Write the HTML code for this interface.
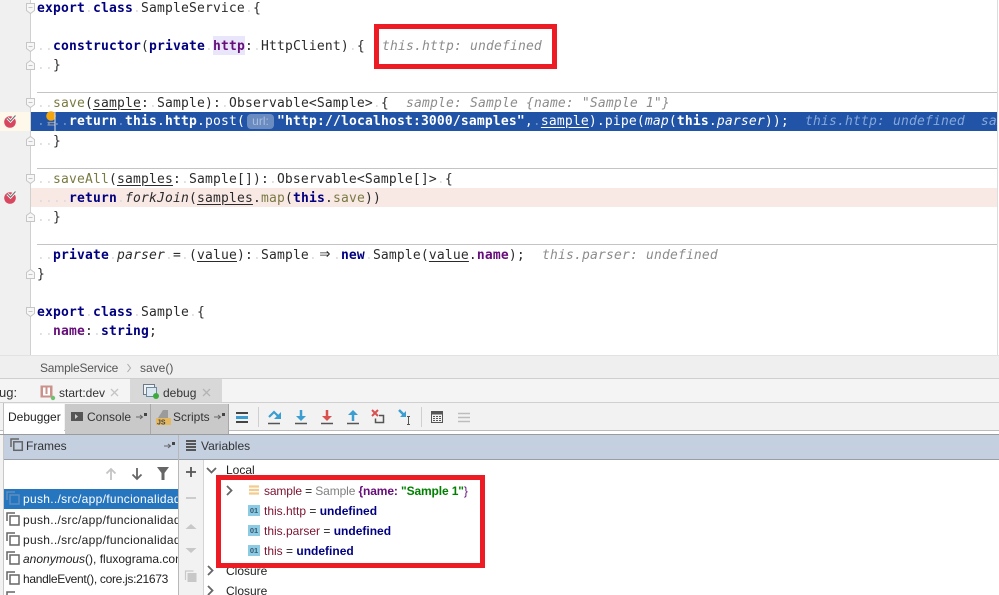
<!DOCTYPE html>
<html><head><meta charset="utf-8"><style>
html,body{margin:0;padding:0;background:#fff}
#p{position:relative;width:999px;height:595px;overflow:hidden;background:#fff}
.a{position:absolute}
.c{position:absolute;left:37px;height:19px;font:13px/19px "DejaVu Sans Mono",monospace;letter-spacing:.17px;white-space:pre;color:#2b2b2b;margin-top:1px}
.c b{color:#000080}
.c i{font-style:italic}
.d{color:#dcdcdc;font-weight:400;font-style:normal}
.h{font-style:italic;color:#8c8c8c}
.pu{color:#660e7a;font-weight:bold}
.ol{color:#7a7a43}
.u{text-decoration:underline;text-underline-offset:2px}
.ar{display:inline-block;width:16px;text-align:center;font-size:18px;line-height:13px;letter-spacing:0}
.s{position:absolute;font:12px/16px "Liberation Sans",sans-serif;white-space:pre;color:#222}
.w .d{color:#6d8fc8}
.w b{color:#fff}
.w{color:#fff}
svg{position:absolute;overflow:visible}
.m{color:#7b1230}.k{color:#000080;font-weight:bold}
</style></head><body><div id="p">

<div class="a" style="left:0;top:0;width:30px;height:355px;background:#f0f0f0"></div>
<div class="a" style="left:30px;top:0;width:1px;height:355px;background:#d0d0d0"></div>
<div class="a" style="left:0;top:112px;width:30px;height:19px;background:#fdf8ea"></div>
<div class="a" style="left:31px;top:112px;width:967px;height:19px;background:#2154a6"></div>
<div class="a" style="left:31px;top:188px;width:967px;height:19px;background:#f8e9e5"></div>
<div class="a" style="left:37px;top:92px;width:961px;height:1px;background:#c4c4c4"></div>
<div class="a" style="left:37px;top:168px;width:961px;height:1px;background:#c4c4c4"></div>
<div class="a" style="left:37px;top:244px;width:961px;height:1px;background:#c4c4c4"></div>
<div class="a" style="left:997px;top:0;width:1px;height:355px;background:#dcdcdc"></div>
<div class="a" style="left:213px;top:36px;width:32px;height:19px;background:#e9e6fb"></div>

<div class="c" style="top:-2px"><b>export</b><span class="d">.</span><b>class</b><span class="d">.</span>SampleService<span class="d">.</span>{</div>
<div class="c" style="top:36px"><span class="d">..</span><b>constructor</b>(<b>private</b><span class="d">.</span><span class="pu">http</span>:<span class="d">.</span>HttpClient)<span class="d">.</span>{</div>
<div class="c h" style="top:36px;left:382px">this.http: undefined</div>
<div class="c" style="top:55px"><span class="d">..</span>}</div>
<div class="c" style="top:93px"><span class="d">..</span><span class="ol">save</span>(<span class="u">sample</span>:<span class="d">.</span>Sample):<span class="d">.</span>Observable&lt;Sample&gt;<span class="d">.</span>{</div>
<div class="c h" style="top:93px;left:406px">sample: Sample {name: "Sample 1"}</div>
<div class="c w" style="top:112px;margin-top:0;line-height:20px"><span class="d">....</span><b>return</b><span class="d">.</span><b>this</b>.<b>http</b>.post(</div>
<div class="a" style="left:247px;top:114px;width:27px;height:15px;border-radius:4px;background:#6b8cc0;color:#a9bedd;font:12px/15px 'Liberation Sans',sans-serif;text-align:center">url:</div>
<div class="c w" style="top:112px;left:277px;margin-top:0;line-height:20px"><b>"http://localhost:3000/samples"</b>,<span class="d">.</span><span class="u">sample</span>).pipe(<i>map</i>(<b>this</b>.<i>parser</i>));</div>
<div class="c" style="top:112px;left:805px;margin-top:0;line-height:20px;color:#86a8dc;font-style:italic;width:192px;overflow:hidden">this.http: undefined  sample</div>
<div class="c" style="top:131px"><span class="d">..</span>}</div>
<div class="c" style="top:169px"><span class="d">..</span><span class="ol">saveAll</span>(<span class="u">samples</span>:<span class="d">.</span>Sample[]):<span class="d">.</span>Observable&lt;Sample[]&gt;<span class="d">.</span>{</div>
<div class="c" style="top:188px"><span class="d">....</span><b>return</b><span class="d">.</span><i>forkJoin</i>(<span class="u">samples</span>.<span class="ol">map</span>(<b>this</b>.<span class="ol">save</span>))</div>
<div class="c" style="top:207px"><span class="d">..</span>}</div>
<div class="c" style="top:245px"><span class="d">..</span><b>private</b><span class="d">.</span><i>parser</i><span class="d">.</span>=<span class="d">.</span>(<span class="u">value</span>):<span class="d">.</span>Sample<span class="d">.</span><span class="ar">⇒</span><span class="d">.</span><b>new</b><span class="d">.</span>Sample(<span class="u">value</span>.<span class="pu">name</span>);</div>
<div class="c h" style="top:245px;left:542px">this.parser: undefined</div>
<div class="c" style="top:264px">}</div>
<div class="c" style="top:302px"><b>export</b><span class="d">.</span><b>class</b><span class="d">.</span>Sample<span class="d">.</span>{</div>
<div class="c" style="top:321px"><span class="d">..</span><span class="pu">name</span>:<span class="d">.</span><b>string</b>;</div>

<!-- fold markers -->
<svg width="40" height="355" style="left:0;top:0" fill="#f7f7f7" stroke="#c6c6c6">
<path d="M26.500 3.500h8v7l-4 3-4-3z"/><path d="M28.500 7.500h4"/>
<path d="M26.500 42.500h8v6l-4 3-4-3z"/><path d="M28.500 46.500h4"/>
<path d="M26.500 98.500h8v6l-4 3-4-3z"/><path d="M28.500 102.500h4"/>
<path d="M26.500 174.500h8v6l-4 3-4-3z"/><path d="M28.500 178.500h4"/>
<path d="M26.500 307.500h8v6l-4 3-4-3z"/><path d="M28.500 311.500h4"/>
<path d="M26.500 69.500h8v-6l-4-3-4 3z"/><path d="M28.500 65.500h4"/>
<path d="M26.500 145.500h8v-6l-4-3-4 3z"/><path d="M28.500 141.500h4"/>
<path d="M26.500 221.500h8v-6l-4-3-4 3z"/><path d="M28.500 217.500h4"/>
<path d="M26.500 278.500h8v-6l-4-3-4 3z"/><path d="M28.500 274.500h4"/>
</svg>

<!-- breakpoints -->
<svg width="40" height="220" style="left:0;top:0">
<circle cx="10" cy="122" r="5.800" fill="#d9465f"/><path d="M7.500 118l3 3 5-5.500" fill="none" stroke="#fff" stroke-width="3"/><path d="M7.500 118l3 3 5-5.500" fill="none" stroke="#777" stroke-width="1.300"/>
<circle cx="10" cy="198" r="5.800" fill="#d9465f"/><path d="M7.500 194l3 3 5-5.500" fill="none" stroke="#fff" stroke-width="3"/><path d="M7.500 194l3 3 5-5.500" fill="none" stroke="#777" stroke-width="1.300"/>
</svg>
<svg width="70" height="140" style="left:0;top:0">
<circle cx="51" cy="116" r="4.800" fill="#f2a60f"/>
<path d="M47.500 122.500h7M47.500 125h7" stroke="#8a93a8" stroke-width="1.200"/>
<path d="M55 112v19" stroke="#dfe6f2"/>
</svg>

<!-- Red box 1 -->
<div class="a" style="left:374px;top:24px;width:173px;height:35px;border:5px solid #ed1c24"></div>

<!-- breadcrumb -->
<div class="a" style="left:0;top:355px;width:999px;height:23px;background:#efefef;border-top:1px solid #e2e2e2;box-sizing:border-box"></div>
<div class="s" style="left:40px;top:360px;color:#555;letter-spacing:-.2px">SampleService</div>
<svg width="8" height="10" style="left:126px;top:363px"><path d="M1.500 1l3 4-3 4" fill="none" stroke="#a8a8a8"/></svg>
<div class="s" style="left:140px;top:360px;color:#555">save()</div>

<!-- debug tabs -->
<div class="a" style="left:0;top:378px;width:999px;height:25px;background:#f4f4f4;border-top:1px solid #cfcfcf;border-bottom:1px solid #d0d0d0;box-sizing:border-box"></div>
<div class="a" style="left:130px;top:379px;width:92px;height:23px;background:#d8d8d8"></div>
<div class="s" style="left:-1px;top:385px;color:#333;font-size:13px">ug:</div>
<svg width="16" height="16" style="left:40px;top:385px"><rect x=".5" y=".5" width="12" height="12" fill="#c9928a"/><rect x="3" y="2.500" width="7" height="8" fill="#fff"/><rect x="5.500" y="2" width="2" height="7" fill="#c9928a"/><circle cx="13" cy="13" r="2.200" fill="#6fc06f"/></svg>
<div class="s" style="left:59px;top:385px;color:#333">start:dev</div>
<svg width="10" height="10" style="left:110px;top:388px"><path d="M1 1l7 7M8 1l-7 7" stroke="#c4c4c4" stroke-width="1.300"/></svg>
<svg width="18" height="16" style="left:143px;top:384px"><rect x=".5" y=".5" width="11" height="10" fill="#f2f2f2" stroke="#6a7a8a"/><rect x="3.500" y="3.500" width="10" height="9" fill="#dbe8f2" stroke="#6a8aa0"/><circle cx="13" cy="12" r="3" fill="#3cab3c"/></svg>
<div class="s" style="left:163px;top:385px;color:#333">debug</div>
<svg width="10" height="10" style="left:202px;top:388px"><path d="M1 1l7 7M8 1l-7 7" stroke="#b4b4b4" stroke-width="1.300"/></svg>

<!-- toolbar -->
<div class="a" style="left:0;top:403px;width:999px;height:28px;background:#f2f2f2"></div>
<div class="a" style="left:0;top:430px;width:999px;height:1px;background:#bcbcbc"></div>
<div class="a" style="left:0;top:431px;width:999px;height:3px;background:#fff"></div>
<div class="a" style="left:3px;top:403px;width:1px;height:32px;background:#c0c0c0"></div>
<div class="a" style="left:4px;top:404px;width:60px;height:30px;background:#fff"></div>
<div class="a" style="left:65px;top:404px;width:85px;height:30px;background:#c9c9c9"></div>
<div class="a" style="left:150px;top:404px;width:1px;height:30px;background:#a8a8a8"></div>
<div class="a" style="left:151px;top:404px;width:77px;height:30px;background:#c9c9c9"></div>
<div class="a" style="left:228px;top:404px;width:1px;height:30px;background:#a8a8a8"></div>
<div class="s" style="left:8px;top:409px;color:#222">Debugger</div>
<svg width="12" height="10" style="left:71px;top:412px"><rect width="12" height="9" fill="#555"/><path d="M4 2l3 2.500-3 2.500z" fill="#ccc"/></svg>
<div class="s" style="left:87px;top:409px;color:#333">Console</div>
<svg width="12" height="8" style="left:136px;top:413px"><path d="M0 4h6M4 2l2.500 2-2.500 2" fill="none" stroke="#666"/><rect x="8" y="0" width="3" height="3" fill="#444"/></svg>
<svg width="16" height="16" style="left:156px;top:410px"><path d="M7 0h5v8H2z" fill="#9b9b9b"/><rect y="8" width="15" height="7" fill="#e6b95f"/><text x="1" y="14.500" font-size="7" font-family="Liberation Sans" font-weight="bold" fill="#444">JS</text></svg>
<div class="s" style="left:173px;top:409px;color:#333">Scripts</div>
<svg width="12" height="8" style="left:214px;top:413px"><path d="M0 4h6M4 2l2.500 2-2.500 2" fill="none" stroke="#666"/><rect x="8" y="0" width="3" height="3" fill="#444"/></svg>
<svg width="14" height="12" style="left:236px;top:412px"><rect width="12" height="2" y="0" fill="#444"/><rect width="12" height="3" y="4" fill="#3c9ed0"/><rect width="12" height="2" y="9" fill="#444"/></svg>
<div class="a" style="left:258px;top:407px;width:1px;height:20px;background:#cfcfcf"></div>
<div class="a" style="left:421px;top:407px;width:1px;height:20px;background:#cfcfcf"></div>
<svg width="170" height="20" style="left:265px;top:408px" fill="none">
<path d="M4 9l5-5 4 4" stroke="#3c9ed0" stroke-width="2.200"/><path d="M9 11h7V4z" fill="#3c9ed0"/><path d="M3 15.500h12" stroke="#555" stroke-width="1.500"/>
<path d="M36 2v8" stroke="#3c9ed0" stroke-width="2.500"/><path d="M31 8h10l-5 5z" fill="#3c9ed0"/><path d="M30 15.500h12" stroke="#555" stroke-width="1.500"/>
<path d="M62 2v8" stroke="#d9504f" stroke-width="2.500"/><path d="M57 8h10l-5 5z" fill="#d9504f"/><path d="M56 15.500h12" stroke="#555" stroke-width="1.500"/>
<path d="M88 13V6" stroke="#3c9ed0" stroke-width="2.500"/><path d="M83 7h10l-5-5z" fill="#3c9ed0"/><path d="M82 15.500h12" stroke="#555" stroke-width="1.500"/>
<path d="M107 2l6 6M113 2l-6 6" stroke="#d9504f" stroke-width="2"/><path d="M114 7.500h4.500v7h-8v-4" stroke="#555" stroke-width="1.500"/>
<path d="M134 2l6 6" stroke="#3c9ed0" stroke-width="2.500"/><path d="M141 3v6h-6z" fill="#3c9ed0"/><path d="M142 8.500h3M142 16.500h3M143.500 8.500v8" stroke="#555"/>
</svg>
<svg width="14" height="14" style="left:431px;top:411px"><rect x=".5" y=".5" width="11" height="11" fill="none" stroke="#555"/><rect y="0" width="12" height="3.500" fill="#555"/><path d="M2 5.500h8M2 7.500h8M2 9.500h8" stroke="#555" stroke-dasharray="2 1"/></svg>
<svg width="14" height="12" style="left:458px;top:412px"><path d="M0 1.500h12M0 5.500h12M0 9.500h12" stroke="#bdbdbd" stroke-width="1.500"/></svg>

<div class="a" style="left:0;top:434px;width:999px;height:1px;background:#9b9b9b"></div>
<!-- panel -->
<div class="a" style="left:0;top:435px;width:999px;height:160px;background:#fff"></div>
<div class="a" style="left:0;top:435px;width:3px;height:160px;background:#f2f2f2"></div>
<div class="a" style="left:4px;top:435px;width:995px;height:24px;background:#c4cfe0"></div>
<div class="a" style="left:4px;top:459px;width:995px;height:1px;background:#9a9fa6"></div>
<div class="a" style="left:3px;top:435px;width:1px;height:160px;background:#c8c8c8"></div>
<div class="a" style="left:178px;top:435px;width:1px;height:160px;background:#b8b8b8"></div>
<svg width="14" height="14" style="left:10px;top:438px" fill="none" stroke="#666" stroke-width="1.500"><path d="M1 9V1h8"/><rect x="3.800" y="3.800" width="8.500" height="8.500"/></svg>
<div class="s" style="left:26px;top:438px;color:#333">Frames</div>
<svg width="12" height="8" style="left:164px;top:442px"><path d="M0 4h6M4 2l2.500 2-2.500 2" fill="none" stroke="#666"/><rect x="8" y="0" width="3" height="3" fill="#444"/></svg>
<svg width="11" height="11" style="left:186px;top:440px"><path d="M0 1h10M0 4h10M0 7h10M0 10h10" stroke="#555" stroke-width="2"/></svg>
<div class="s" style="left:201px;top:438px;color:#333">Variables</div>

<!-- frames toolbar -->
<svg width="70" height="16" style="left:104px;top:466px">
<path d="M7 14V3M2.500 7.500L7 3l4.500 4.500" fill="none" stroke="#c4c4c4" stroke-width="1.800"/>
<path d="M33 2v11M28.500 8.500L33 13l4.500-4.500" fill="none" stroke="#666" stroke-width="1.800"/>
<path d="M53 1h12l-4.500 6v7h-3V7z" fill="#666"/>
</svg>

<!-- frames -->
<div class="a" style="left:4px;top:489px;width:174px;height:20px;background:#2675bf"></div>
<svg width="20" height="100" style="left:5px;top:489px" fill="none" stroke="#666" stroke-width="1.500">
<g stroke="#5d8fc0"><path d="M2 11V3h8"/><rect x="5" y="6" width="9" height="9"/></g>
<path d="M2 32V24h8"/><rect x="5" y="27" width="9" height="9"/>
<path d="M2 52V44h8"/><rect x="5" y="47" width="9" height="9"/>
<path d="M2 71V63h8"/><rect x="5" y="66" width="9" height="9"/>
<path d="M2 91V83h8"/><rect x="5" y="86" width="9" height="9"/>
<path d="M2 111V103h8"/>
</svg>
<div class="a" style="left:23px;top:489px;width:155px;height:106px;overflow:hidden">
<div class="s" style="left:0;top:2px;color:#fff;letter-spacing:.3px">push../src/app/funcionalidades</div>
<div class="s" style="left:0;top:23px;letter-spacing:.3px">push../src/app/funcionalidades</div>
<div class="s" style="left:0;top:43px;letter-spacing:.3px">push../src/app/funcionalidades</div>
<div class="s" style="left:0;top:62px"><i>anonymous</i>(), fluxograma.component</div>
<div class="s" style="left:0;top:82px;letter-spacing:-.3px">handleEvent(), core.js:21673</div>
</div>

<!-- var toolbar -->
<div class="a" style="left:179px;top:460px;width:24px;height:135px;background:#f2f2f2"></div>
<div class="a" style="left:203px;top:460px;width:1px;height:135px;background:#d4d4d4"></div>
<svg width="24" height="130" style="left:179px;top:464px">
<path d="M12 3v10M7 8h10" stroke="#555" stroke-width="1.800"/>
<path d="M7 34h10" stroke="#c8c8c8" stroke-width="1.800"/>
<path d="M6.500 65l5.500-5 5.500 5z" fill="#c8c8c8"/>
<path d="M6.500 84l5.500 5 5.500-5z" fill="#c8c8c8"/>
<path d="M6.500 116v-9h8" fill="none" stroke="#c8c8c8" stroke-width="1.200"/><rect x="8.500" y="109" width="9" height="9" fill="#c8c8c8"/>
</svg>

<!-- variables -->
<svg width="30" height="140" style="left:205px;top:460px" fill="none" stroke="#666" stroke-width="1.800">
<path d="M2 8l4.500 4.500L11 8"/>
<path d="M22 26l4.500 4.500L22 35"/>
<path d="M3 106l4.500 4.500L3 115"/>
<path d="M3 126l4.500 4.500L3 135"/>
</svg>
<div class="s" style="left:226px;top:462px">Local</div>
<svg width="12" height="12" style="left:249px;top:485px"><path d="M0 1.500h10M0 5h10M0 8.500h10" stroke="#f2cc8f" stroke-width="2.200"/></svg>
<div class="s" style="left:264px;top:483px;letter-spacing:-.12px"><span class="m">sample</span> = <span style="color:#808080">Sample</span> <span class="pu">{name:</span> <b style="color:#008000">"Sample 1"</b><span class="pu" style="font-weight:400">}</span></div>
<div class="a" style="left:248px;top:505px;width:12px;height:11px;background:#8ccbe4;color:#3a5a70;font:bold 7.500px/11px 'Liberation Sans',sans-serif;text-align:center">01</div>
<div class="s" style="left:264px;top:503px"><span class="m">this.http</span> = <span class="k">undefined</span></div>
<div class="a" style="left:248px;top:525px;width:12px;height:11px;background:#8ccbe4;color:#3a5a70;font:bold 7.500px/11px 'Liberation Sans',sans-serif;text-align:center">01</div>
<div class="s" style="left:264px;top:523px"><span class="m">this.parser</span> = <span class="k">undefined</span></div>
<div class="a" style="left:248px;top:545px;width:12px;height:11px;background:#8ccbe4;color:#3a5a70;font:bold 7.500px/11px 'Liberation Sans',sans-serif;text-align:center">01</div>
<div class="s" style="left:264px;top:543px"><span class="m">this</span> = <span class="k">undefined</span></div>
<div class="s" style="left:226px;top:563px">Closure</div>
<div class="s" style="left:226px;top:583px">Closure</div>

<!-- Red box 2 -->
<div class="a" style="left:216px;top:475px;width:259px;height:83px;border:5px solid #ed1c24"></div>
</div></body></html>
